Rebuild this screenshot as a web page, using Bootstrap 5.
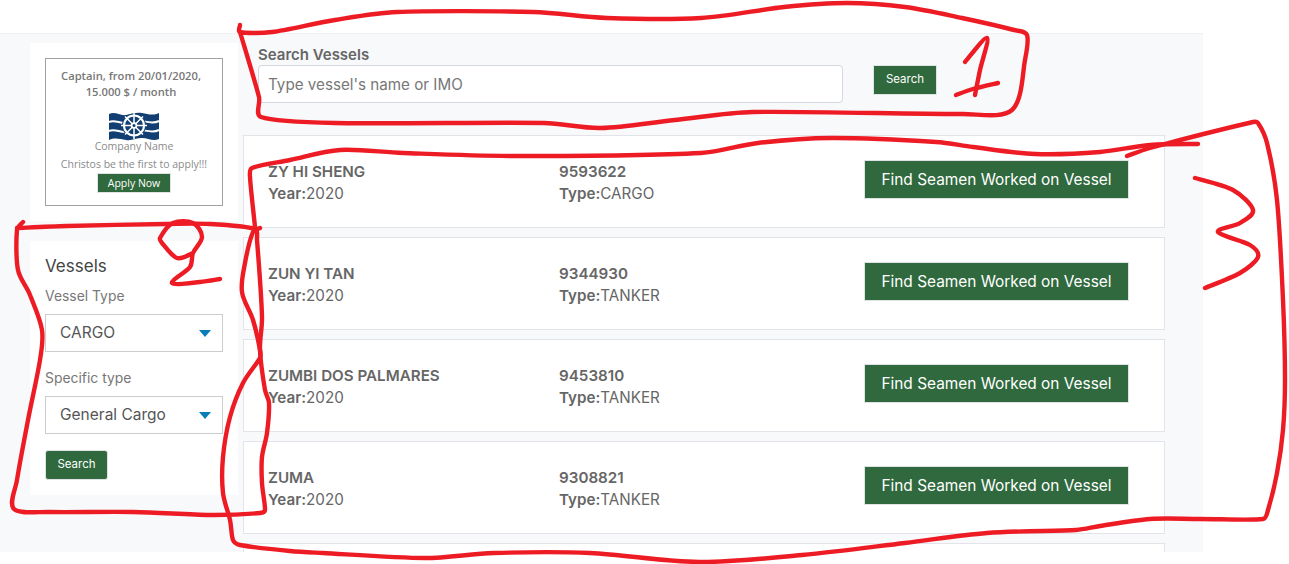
<!DOCTYPE html>
<html lang="en">
  <head>
    <meta charset="UTF-8" />
    <title>Search Vessels</title>
    <link
      href="https://cdn.jsdelivr.net/npm/bootstrap@5.3.2/dist/css/bootstrap.min.css"
      rel="stylesheet"
    />
    <style>
      html, body { height: 564px; overflow: hidden; }
      body {
        background: #fff;
        color: #666;
        font-family: Inter, "Liberation Sans", sans-serif;
        font-size: 15px;
        position: relative;
      }
      .page-panel {
        width: 1203px;
        height: 519px;
        margin-top: 33px;
        background: #f8f9fb;
        border-top: 1px solid #f0f1f4;
        overflow: hidden;
        padding-left: 30px;
      }
      .side-col { width: 208px; flex: none; padding-top: 9px; }
      .side-box { background: #fff; padding: 15px; }
      .ad-box { height: 178px; margin-bottom: 20px; }
      .ad-inner {
        border: 1px solid #a0a0a0;
        height: 148px;
        text-align: center;
        color: #8a8a8a;
        font-family: "Open Sans", sans-serif;
        font-size: 10.5px;
        line-height: 1.2;
        padding-top: 9px;
      }
      .ad-title { font-weight: 600; font-size: 11.2px; line-height: 16px; color: #777; margin-bottom: 11px; padding-right: 6px; }
      .ad-logo { display: block; margin: 0 auto -1px; }
      .ad-company { margin-bottom: 5px; }
      .btn-green {
        background: #2f693d;
        border: 1px solid #dfe3e6;
        border-radius: 0;
        color: #fff;
      }
      .btn-green:hover { background: #2f693d; color: #fff; }
      .btn-apply { font-family: "Open Sans", sans-serif; font-size: 10.5px; padding: 0 10px; height: 20px; line-height: 18px; margin-top: 3px; }
      .filter-box { height: 254px; padding-top: 15px; }
      .filter-title { font-size: 17px; font-weight: 400; color: #444; margin-bottom: 11px; line-height: 20px; }
      .filter-label { font-size: 13.9px; color: #777; margin-bottom: 9px; line-height: 18px; display: block; }
      .filter-select {
        height: 38px;
        border: 1px solid #ccc;
        border-radius: 0;
        color: #555;
        font-size: 15.5px;
        padding: 0 30px 0 14px;
        margin-bottom: 17px;
        background-image: url("data:image/svg+xml,%3Csvg xmlns='http://www.w3.org/2000/svg' width='12' height='7'%3E%3Cpath d='M0 0h12L6 7z' fill='%230a7db8'/%3E%3C/svg%3E");
        background-size: 12px 7px;
        background-position: right 11px center;
      }
      .btn-filter { font-size: 11.5px; height: 30px; width: 63px; padding: 0; border-radius: 3px; margin-top: -1px; }
      .main-col { width: 922px; margin-left: 5px; flex: none; }
      .search-row { padding: 12px 0 0 15px; height: 101px; }
      .search-label { font-size: 15px; font-weight: 600; color: #666; line-height: 17px; margin-bottom: 2px; display: block; }
      .search-input {
        width: 585px;
        height: 38px;
        border-color: #d5d8dc;
        border-radius: 4px;
        font-size: 15.2px;
        padding-left: 9px;
      }
      .search-input::placeholder { color: #777; }
      .btn-top { font-size: 11.5px; width: 64px; height: 30px; padding: 0; margin-left: 30px; }
      .vessel-card {
        height: 93px;
        border: 1px solid #e2e4e9;
        border-radius: 0;
        margin-bottom: 9px;
        flex-direction: row;
        padding: 24px 35px 0 24px;
      }
      .vessel-col { width: 291px; font-size: 15.2px; line-height: 22px; padding-top: 1px; }
      .vessel-strong { font-weight: 600; }
      .btn-find { font-size: 15.4px; width: 265px; height: 39px; padding: 0; margin-left: auto; }
      .ink { position: absolute; left: 0; top: 0; pointer-events: none; }
    </style>
  </head>
  <body>
    <div class="page-panel d-flex">
      <div class="side-col">
        <div class="side-box ad-box">
          <div class="ad-inner">
            <div class="ad-title">Captain, from 20/01/2020,<br />15.000 $ / month</div>
            <svg class="ad-logo" width="52" height="30" viewBox="0 0 52 30">
              <path d="M1 3c6-3 11 2 17 1s10-3 16-2 11 3 17 0v26c-6 3-11-1-17-1s-10 3-16 2-11-3-17 0z" fill="#123f73" />
              <path d="M1 11c6-3 11 2 17 1s10-3 16-2 11 3 17 0M1 20c6-3 11 2 17 1s10-3 16-2 11 3 17 0" fill="none" stroke="#fff" stroke-width="2" />
              <circle cx="26" cy="14.5" r="12" fill="#123f73" />
              <circle cx="26" cy="14.5" r="10" fill="none" stroke="#fff" stroke-width="2" />
              <circle cx="26" cy="14.5" r="2.5" fill="none" stroke="#fff" stroke-width="1.5" />
              <path d="M26 1v27M13 14.5h26M17 5.5l18 18M35 5.5l-18 18" stroke="#fff" stroke-width="1.5" />
              <circle cx="26" cy="14.5" r="1.5" fill="#123f73" />
            </svg>
            <div class="ad-company">Company Name</div>
            <div>Christos be the first to apply!!!</div>
            <button class="btn btn-green btn-apply" type="button">Apply Now</button>
          </div>
        </div>
        <div class="side-box filter-box">
          <div class="filter-title">Vessels</div>
          <label class="filter-label" for="vesselType">Vessel Type</label>
          <select class="form-select filter-select" id="vesselType">
            <option>CARGO</option>
          </select>
          <label class="filter-label" for="specificType">Specific type</label>
          <select class="form-select filter-select" id="specificType">
            <option>General Cargo</option>
          </select>
          <button class="btn btn-green btn-filter" type="button">Search</button>
        </div>
      </div>
      <div class="main-col">
        <div class="search-row">
          <label class="search-label" for="vesselSearch">Search Vessels</label>
          <div class="d-flex">
            <input class="form-control search-input" id="vesselSearch" type="text" placeholder="Type vessel's name or IMO" />
            <button class="btn btn-green btn-top" type="button">Search</button>
          </div>
        </div>
        <div class="card vessel-card">
          <div class="vessel-col"><div class="vessel-strong">ZY HI SHENG</div><div><span class="vessel-strong">Year:</span>2020</div></div>
          <div class="vessel-col"><div class="vessel-strong">9593622</div><div><span class="vessel-strong">Type:</span>CARGO</div></div>
          <button class="btn btn-green btn-find" type="button">Find Seamen Worked on Vessel</button>
        </div>
        <div class="card vessel-card">
          <div class="vessel-col"><div class="vessel-strong">ZUN YI TAN</div><div><span class="vessel-strong">Year:</span>2020</div></div>
          <div class="vessel-col"><div class="vessel-strong">9344930</div><div><span class="vessel-strong">Type:</span>TANKER</div></div>
          <button class="btn btn-green btn-find" type="button">Find Seamen Worked on Vessel</button>
        </div>
        <div class="card vessel-card">
          <div class="vessel-col"><div class="vessel-strong">ZUMBI DOS PALMARES</div><div><span class="vessel-strong">Year:</span>2020</div></div>
          <div class="vessel-col"><div class="vessel-strong">9453810</div><div><span class="vessel-strong">Type:</span>TANKER</div></div>
          <button class="btn btn-green btn-find" type="button">Find Seamen Worked on Vessel</button>
        </div>
        <div class="card vessel-card">
          <div class="vessel-col"><div class="vessel-strong">ZUMA</div><div><span class="vessel-strong">Year:</span>2020</div></div>
          <div class="vessel-col"><div class="vessel-strong">9308821</div><div><span class="vessel-strong">Type:</span>TANKER</div></div>
          <button class="btn btn-green btn-find" type="button">Find Seamen Worked on Vessel</button>
        </div>
        <div class="card vessel-card"></div>
      </div>
    </div>

    <!-- hand drawn red marks over the page -->
    <svg class="ink" id="ink" width="1289" height="564" fill="none" stroke="#ed1c24" stroke-width="4.4" stroke-linecap="round" stroke-linejoin="round"></svg>

    <script>
      const strokes = [
        // box 1
        [[240,25],[240,32],[272,32],[335,20],[397,12],[533,12],[607,18],[701,18],[784,7],[847,3],[905,7],[962,18],[1014,30],[1027,35],[1025,60],[1012,110],[962,114],[753,112],[675,120],[601,128],[544,123],[335,123],[261,117],[259,97],[240,32]],
        // 1
        [[965,62],[987,38],[980,70],[975,95]],
        [[956,95],[973,89],[998,83]],
        // box 2
        [[23,222],[17,230],[18,270],[30,295],[42,330],[40,360],[28,420],[17,480],[14,509],[50,512],[133,512],[210,515],[260,513],[265,510],[262,483],[262,457],[267,433],[269,403],[265,390],[260,350],[262,317],[257,240],[255,229],[210,224],[167,224],[67,226],[17,228]],
        // 2
        [[193,253],[177,258],[162,243],[160,238],[173,223],[193,223],[202,237],[193,253],[190,267],[172,283],[200,282],[220,279]],
        // box 3
        [[255,227],[250,177],[252,168],[290,160],[340,150],[403,153],[518,156],[701,153],[758,143],[831,138],[936,142],[973,147],[1035,154],[1100,152],[1150,145],[1198,144]],
        [[1127,156],[1150,148],[1253,122],[1258,123],[1267,143],[1277,200],[1283,300],[1285,380],[1283,430],[1277,473],[1268,510],[1263,519],[1200,519],[1150,519],[1100,526],[1076,530],[987,533],[905,543],[802,555],[699,562],[590,553],[494,553],[425,558],[323,553],[290,551],[240,545],[233,540],[230,520],[223,493],[223,457],[230,417],[243,383],[260,358],[260,350],[253,320],[242,292],[245,263],[253,232],[260,228]],
        // 3
        [[1195,178],[1233,190],[1253,210],[1240,223],[1218,232],[1250,245],[1258,257],[1240,273],[1205,288]],
      ];

      // smooth the points a bit so they look like a pen line
      function smooth(pts) {
        let d = `M${pts[0][0]} ${pts[0][1]}`;
        for (let i = 0; i < pts.length - 1; i++) {
          const a = pts[i - 1] || pts[i];
          const b = pts[i];
          const c = pts[i + 1];
          const e = pts[i + 2] || c;
          const len = Math.hypot(c[0] - b[0], c[1] - b[1]);
          // keep the handles short so corners don't bulge out
          const k1 = Math.min(1 / 6, len / (3 * Math.hypot(c[0] - a[0], c[1] - a[1]) || 1));
          const k2 = Math.min(1 / 6, len / (3 * Math.hypot(e[0] - b[0], e[1] - b[1]) || 1));
          d += `C${b[0] + (c[0] - a[0]) * k1} ${b[1] + (c[1] - a[1]) * k1} ${c[0] - (e[0] - b[0]) * k2} ${c[1] - (e[1] - b[1]) * k2} ${c[0]} ${c[1]}`;
        }
        return d;
      }
      document.getElementById('ink').innerHTML = strokes
        .map((s) => `<path d="${smooth(s)}" />`)
        .join('');
    </script>
    <script src="https://cdn.jsdelivr.net/npm/bootstrap@5.3.2/dist/js/bootstrap.bundle.min.js"></script>
  </body>
</html>
